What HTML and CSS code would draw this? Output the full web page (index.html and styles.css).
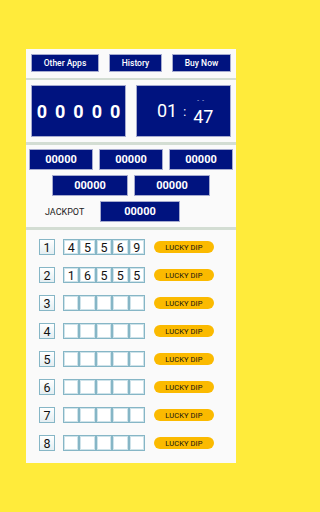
FILE: index.html
```html
<!DOCTYPE html>
<html>
<head>
<meta charset="utf-8">
<link rel="stylesheet" href="styles.css">
</head>
<body>
<div class="panel">
  <div class="topbar">
    <div class="btn b1">Other Apps</div>
    <div class="btn b2">History</div>
    <div class="btn b3">Buy Now</div>
  </div>
  <div class="sep"></div>
  <div class="displays">
    <div class="disp count">0 0 0 0 0</div>
    <div class="disp timer">
      <span class="t-h">01</span>
      <span class="t-c">:</span>
      <span class="t-m"><span class="t-dash">- -</span>47</span>
    </div>
  </div>
  <div class="sep s2"></div>
  <div class="results">
    <div class="rrow r1">
      <div class="num w64">00000</div>
      <div class="num w64">00000</div>
      <div class="num w64">00000</div>
    </div>
    <div class="rrow r2">
      <div class="num w76">00000</div>
      <div class="num w76">00000</div>
    </div>
    <div class="rrow r3">
      <div class="jack">JACKPOT</div>
      <div class="num w80">00000</div>
    </div>
  </div>
  <div class="sep s3"></div>
  <div class="lines">
    <div class="line"><div class="idx">1</div><div class="digits"><span>4</span><span>5</span><span>5</span><span>6</span><span>9</span></div><div class="pill">LUCKY DIP</div></div>
    <div class="line"><div class="idx">2</div><div class="digits"><span>1</span><span>6</span><span>5</span><span>5</span><span>5</span></div><div class="pill">LUCKY DIP</div></div>
    <div class="line"><div class="idx">3</div><div class="digits"><span></span><span></span><span></span><span></span><span></span></div><div class="pill">LUCKY DIP</div></div>
    <div class="line"><div class="idx">4</div><div class="digits"><span></span><span></span><span></span><span></span><span></span></div><div class="pill">LUCKY DIP</div></div>
    <div class="line"><div class="idx">5</div><div class="digits"><span></span><span></span><span></span><span></span><span></span></div><div class="pill">LUCKY DIP</div></div>
    <div class="line"><div class="idx">6</div><div class="digits"><span></span><span></span><span></span><span></span><span></span></div><div class="pill">LUCKY DIP</div></div>
    <div class="line"><div class="idx">7</div><div class="digits"><span></span><span></span><span></span><span></span><span></span></div><div class="pill">LUCKY DIP</div></div>
    <div class="line"><div class="idx">8</div><div class="digits"><span></span><span></span><span></span><span></span><span></span></div><div class="pill">LUCKY DIP</div></div>
  </div>
</div>
</body>
</html>
```
FILE: styles.css
```css
html, body {
  margin: 0;
  padding: 0;
  background: #ffeb3b;
  font-family: Roboto, "Liberation Sans", sans-serif;
}
body {
  width: 262px;
  height: 512px;
  overflow: hidden;
}
.panel {
  margin: 49px 0 0 26px;
  width: 210px;
  height: 414px;
  background: #fafafa;
  box-sizing: border-box;
}
.topbar {
  display: flex;
  gap: 10px;
  padding: 5px 5px 0 5px;
  height: 18px;
}
.btn {
  background: #00137f;
  color: #fff;
  border: 1px solid #a6abcf;
  box-sizing: border-box;
  height: 18px;
  font-size: 8.5px;
  font-weight: 500;
  display: flex;
  align-items: center;
  justify-content: center;
}
.b1 { width: 68px; }
.b2 { width: 53px; }
.b3 { width: 59px; }
.sep {
  height: 2px;
  margin-top: 6px;
  background: #d3ddd3;
}
.displays {
  display: flex;
  gap: 10px;
  padding: 5px 5px 0 5px;
}
.disp {
  width: 95px;
  height: 52px;
  background: #00137f;
  border: 1px solid #a6abcf;
  box-sizing: border-box;
  color: #fff;
}
.count {
  display: flex;
  align-items: center;
  justify-content: center;
  font-size: 18px;
  font-weight: bold;
  word-spacing: 3.5px;
  padding-top: 1px;
}
.timer {
  display: flex;
  align-items: flex-start;
  padding-left: 20px;
}
.t-h {
  font-size: 18px;
  margin-top: 14px;
}
.t-c {
  font-size: 12px;
  margin: 19px 0 0 6px;
}
.t-m {
  position: relative;
  font-size: 18px;
  margin: 20px 0 0 7px;
}
.t-dash {
  position: absolute;
  left: 4px;
  top: -10px;
  font-size: 6px;
  letter-spacing: 1px;
}
.s2 { margin-top: 5px; height: 3px; }
.results {
  padding: 4px 3px 0 3px;
  display: flex;
  flex-direction: column;
  gap: 5px;
}
.rrow {
  display: flex;
  gap: 6px;
  height: 21px;
}
.r2 { padding-left: 23px; }
.r3 { align-items: center; padding-left: 16px; gap: 0; }
.num {
  height: 21px;
  background: #00137f;
  border: 1px solid #a6abcf;
  box-sizing: border-box;
  color: #fff;
  font-size: 11px;
  font-weight: bold;
  display: flex;
  align-items: center;
  justify-content: center;
}
.w64 { width: 64px; }
.w76 { width: 76px; }
.w80 { width: 80px; }
.jack {
  font-size: 9px;
  color: #222;
  width: 55px;
}
.s3 { margin-top: 5px; height: 3px; }
.lines {
  padding: 9px 0 0 13px;
  display: flex;
  flex-direction: column;
  gap: 12px;
}
.line {
  display: flex;
  align-items: center;
  height: 16px;
}
.idx {
  width: 16px;
  height: 16px;
  box-sizing: border-box;
  border: 1px solid #86b6c6;
  background: linear-gradient(#ffffff, #e4eef2);
  font-size: 12.5px;
  color: #111;
  display: flex;
  align-items: center;
  justify-content: center;
}
.digits {
  display: flex;
  margin-left: 8px;
}
.digits span {
  width: 16.4px;
  height: 16px;
  box-sizing: border-box;
  border: 1px solid #86b6c6;
  box-shadow: inset 0 0 0 1px #cfe3ea;
  background: #fff;
  font-size: 12.5px;
  color: #111;
  display: flex;
  align-items: center;
  justify-content: center;
}
.pill {
  margin-left: 9px;
  width: 60px;
  height: 12px;
  border-radius: 6px;
  background: #fbba00;
  color: #111;
  font-size: 7.5px;
  font-weight: 400;
  display: flex;
  align-items: center;
  justify-content: center;
  letter-spacing: 0.1px;
}
```
